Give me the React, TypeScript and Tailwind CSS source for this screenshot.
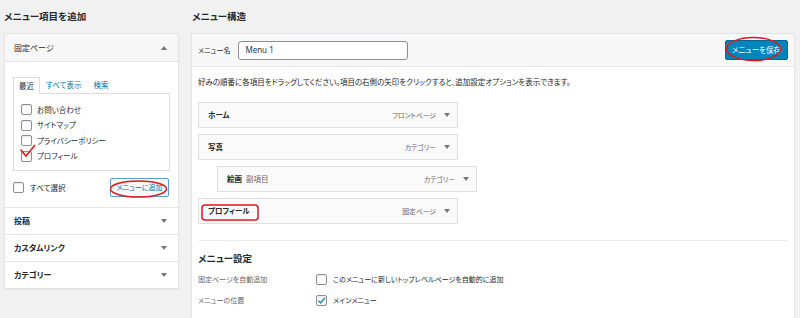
import React from "react";

const F = "[font-family:'Noto_Sans_CJK_JP','Noto_Sans',sans-serif] [font-feature-settings:'palt']";

function TriDown() {
  return (
    <svg width="6" height="4" viewBox="0 0 6 4" className="shrink-0">
      <path d="M0 0 L6 0 L3 4 Z" fill="#72777c" />
    </svg>
  );
}
function TriUp() {
  return (
    <svg width="6" height="4" viewBox="0 0 6 4" className="shrink-0">
      <path d="M0 4 L6 4 L3 0 Z" fill="#72777c" />
    </svg>
  );
}

function Box({ checked }: { checked?: boolean }) {
  return (
    <span className="w-[11px] h-[11px] border border-[#8c8f94] rounded-[2px] bg-white shrink-0 flex items-center justify-center shadow-[inset_0_1px_2px_rgba(0,0,0,0.1)]">
      {checked && (
        <svg width="9" height="9" viewBox="0 0 10 10">
          <path d="M1.5 5.2 L4 7.6 L8.6 2.2" stroke="#1e8cbe" strokeWidth="1.6" fill="none" />
        </svg>
      )}
    </span>
  );
}

function AccRow({ title }: { title: string }) {
  return (
    <div className="h-[27px] border-t border-[#e5e5e5] flex items-center justify-between pl-[9px] pr-[11px] bg-white">
      <span className="text-[8px] font-bold text-[#23282d]">{title}</span>
      <TriDown />
    </div>
  );
}

function MenuItem({ title, sub, type, indent }: { title: string; sub?: string; type: string; indent?: boolean }) {
  return (
    <div className={`h-[26px] w-[260px] border border-[#dfdfdf] bg-[#fafafa] flex items-center justify-between pl-[9px] pr-[7px] ${indent ? "ml-[19px]" : ""}`}>
      <span className="text-[7.5px] font-bold text-[#23282d]">
        {title}
        {sub && <span className="font-normal text-[#666] ml-[4px]">{sub}</span>}
      </span>
      <span className="flex items-center gap-[8px]">
        <span className="text-[6.8px] text-[#666]">{type}</span>
        <TriDown />
      </span>
    </div>
  );
}

export default function App() {
  return (
    <div className={`relative w-[800px] h-[318px] bg-[#f1f1f1] overflow-hidden ${F}`}>
      <div className="flex pl-[4px] gap-[12px]">
        {/* Left column */}
        <div className="w-[175px] shrink-0">
          <div className="h-[33px] flex items-center text-[9.5px] font-bold text-[#23282d]">メニュー項目を追加</div>
          <div className="border border-[#e2e4e7] bg-white shadow-[0_1px_1px_rgba(0,0,0,0.04)]">
            <div className="h-[27px] flex items-center justify-between pl-[9px] pr-[11px] bg-[#f7f7f7]">
              <span className="text-[8px] text-[#23282d]">固定ページ</span>
              <TriUp />
            </div>
            <div className="border-t border-[#e5e5e5] bg-white pt-[14px] px-[8px] pb-[10px]">
              <div className="flex items-end h-[17px] text-[7.5px]">
                <div className="h-[17px] px-[5px] flex items-center border border-b-0 border-[#dcdcde] bg-white relative top-[1px] text-[#23282d]">最近</div>
                <div className="px-[6px] text-[#0073aa] h-[16px] flex items-center">すべて表示</div>
                <div className="px-[6px] text-[#0073aa] h-[16px] flex items-center">検索</div>
              </div>
              <div className="h-[78px] border border-[#dcdcde] pt-[10px] pl-[7px] flex flex-col gap-[4.5px]">
                {["お問い合わせ", "サイトマップ", "プライバシーポリシー", "プロフィール"].map((t) => (
                  <div key={t} className="flex items-center gap-[5px] h-[11px]">
                    <Box />
                    <span className="text-[7.5px] text-[#23282d]">{t}</span>
                  </div>
                ))}
              </div>
              <div className="flex items-center justify-between mt-[7px]">
                <div className="flex items-center gap-[6px]">
                  <Box />
                  <span className="text-[7.5px] text-[#23282d]">すべて選択</span>
                </div>
                <div className="w-[59px] h-[19px] border border-[#5b9dd9] rounded-[2px] bg-[#f7f7f7] flex items-center justify-center text-[7px] text-[#0073aa] mr-[1px]">メニューに追加</div>
              </div>
            </div>
            <AccRow title="投稿" />
            <AccRow title="カスタムリンク" />
            <AccRow title="カテゴリー" />
          </div>
        </div>

        {/* Right column */}
        <div className="w-[604px] shrink-0">
          <div className="h-[33px] flex items-center pl-[1px] text-[9.5px] font-bold text-[#23282d]">メニュー構造</div>
          <div className="border border-[#e2e4e7] bg-white h-[300px]">
            <div className="h-[33px] bg-[#f7f7f7] border-b border-[#e5e5e5] flex items-center justify-between pl-[6px] pr-[6px]">
              <div className="flex items-center gap-[8px]">
                <span className="text-[7px] text-[#23282d]">メニュー名</span>
                <div className="w-[170px] h-[19px] border border-[#8c8f94] rounded-[3px] bg-white flex items-center pl-[6px] text-[8px] text-[#32373c] [font-family:'Noto_Sans',sans-serif]">Menu 1</div>
              </div>
              <div className="w-[63px] h-[20px] bg-[#0085ba] border border-[#006799] rounded-[2px] flex items-center justify-center text-[7.5px] text-white">メニューを保存</div>
            </div>
            <div className="pl-[6px] pt-[9px]">
              <div className="text-[7.5px] text-[#23282d] h-[12px] flex items-center">好みの順番に各項目をドラッグしてください。項目の右側の矢印をクリックすると、追加設定オプションを表示できます。</div>
              <div className="flex flex-col gap-[6px] mt-[14px]">
                <MenuItem title="ホーム" type="フロントページ" />
                <MenuItem title="写真" type="カテゴリー" />
                <MenuItem title="絵画" sub="副項目" type="カテゴリー" indent />
                <MenuItem title="プロフィール" type="固定ページ" />
              </div>
              <div className="border-t border-[#eeeeee] mt-[16px] mr-[6px] pt-[10px]">
                <div className="text-[9.5px] font-bold text-[#23282d] h-[14px] flex items-center">メニュー設定</div>
                <div className="flex items-center mt-[8px] h-[13px]">
                  <span className="w-[118px] text-[7px] text-[#666]">固定ページを自動追加</span>
                  <Box />
                  <span className="ml-[6px] text-[7px] text-[#23282d]">このメニューに新しいトップレベルページを自動的に追加</span>
                </div>
                <div className="flex items-center mt-[8px] h-[13px]">
                  <span className="w-[118px] text-[7px] text-[#666]">メニューの位置</span>
                  <Box checked />
                  <span className="ml-[6px] text-[7px] text-[#23282d]">メインメニュー</span>
                </div>
              </div>
            </div>
          </div>
        </div>
      </div>

      {/* Red annotations */}
      <svg className="absolute inset-0 pointer-events-none" width="800" height="318">
        <ellipse cx="138.5" cy="189" rx="28" ry="8" fill="none" stroke="#e8141b" strokeWidth="1.5" />
        <ellipse cx="753.5" cy="49" rx="27" ry="11.5" fill="none" stroke="#e8141b" strokeWidth="1.5" />
        <rect x="202" y="205" width="56" height="15" rx="3" fill="none" stroke="#e8141b" strokeWidth="1.5" />
        <path d="M20.5 149.5 L26 156 L35 145" fill="none" stroke="#e8141b" strokeWidth="1.5" />
      </svg>
    </div>
  );
}
